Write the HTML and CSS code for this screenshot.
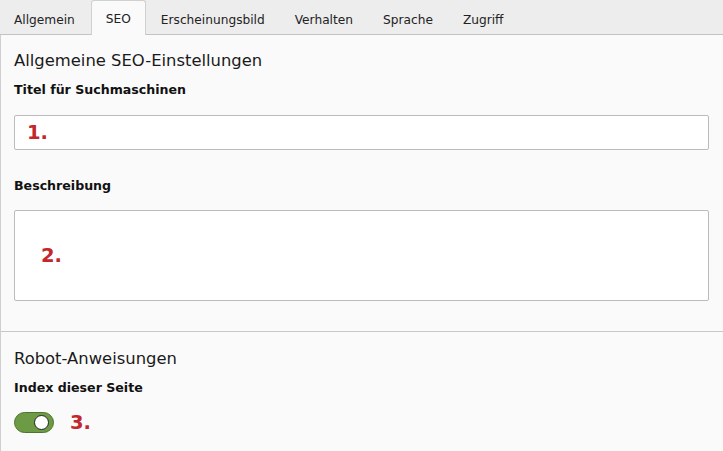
FILE: index.html
```html
<!DOCTYPE html>
<html lang="de">
<head>
<meta charset="utf-8">
<title>SEO</title>
<link rel="stylesheet" href="styles.css">
</head>
<body>
<div class="page">
  <ul class="tabs">
    <li class="tab">Allgemein</li>
    <li class="tab active">SEO</li>
    <li class="tab">Erscheinungsbild</li>
    <li class="tab">Verhalten</li>
    <li class="tab">Sprache</li>
    <li class="tab">Zugriff</li>
  </ul>
  <div class="panel">
    <section class="group group-general">
      <h2 class="group-title">Allgemeine SEO-Einstellungen</h2>
      <div class="field">
        <label class="label">Titel für Suchmaschinen</label>
        <div class="input"><span class="mark">1.</span></div>
      </div>
      <div class="field">
        <label class="label">Beschreibung</label>
        <div class="textarea"><span class="mark">2.</span></div>
      </div>
    </section>
    <section class="group group-robots">
      <h2 class="group-title">Robot-Anweisungen</h2>
      <div class="field">
        <label class="label">Index dieser Seite</label>
        <div class="toggle-row">
          <span class="toggle"><span class="knob"></span></span>
          <span class="mark">3.</span>
        </div>
      </div>
    </section>
  </div>
</div>
</body>
</html>
```

FILE: styles.css
```css
* { box-sizing: border-box; }
html, body { margin: 0; padding: 0; }
body {
  width: 723px;
  height: 451px;
  overflow: hidden;
  font-family: "DejaVu Sans", Verdana, sans-serif;
  color: #111;
  background: #fafafa;
}
.page { display: flex; flex-direction: column; height: 100%; }
.tabs {
  list-style: none;
  margin: 0;
  padding: 0 0 0 0;
  display: flex;
  align-items: flex-end;
  height: 35px;
  background: #ededed;
  border-bottom: 1px solid #c3c3c3;
}
.tab {
  font-size: 12.2px;
  padding: 0 14px;
  height: 34px;
  line-height: 36px;
  color: #222;
  border: 1px solid transparent;
  border-bottom: none;
  margin-bottom: -1px;
}
.tab:first-child { padding: 0 15px 0 13px; }
.tab.active {
  background: #fafafa;
  border-color: #d0d0d0;
  border-radius: 3px 3px 0 0;
  height: 35px;
  line-height: 37px;
  padding: 0 14px;
}
.panel {
  flex: 1;
  background: #fafafa;
  border-left: 1px solid #cfcfcf;
}
.group { padding: 0 14px 0 13px; }
.group-general { padding-top: 16px; padding-bottom: 30px; }
.group-robots {
  border-top: 1px solid #c8c8c8;
  padding-top: 17px;
}
.group-title {
  margin: 0;
  font-size: 16.4px;
  font-weight: normal;
  line-height: 20px;
  color: #1a1a1a;
}
.field { margin-top: 11px; }
.field + .field { margin-top: 28px; }
.label {
  display: block;
  font-size: 12.6px;
  font-weight: bold;
  line-height: 16px;
  color: #111;
}
.input, .textarea {
  margin-top: 17px;
  width: 695px;
  background: #fff;
  border: 1px solid #bbb;
  border-radius: 2px;
  display: flex;
  align-items: center;
}
.input { height: 35px; padding-left: 12px; }
.textarea { height: 91px; padding-left: 26px; margin-top: 16px; }
.mark {
  color: #c1272d;
  font-family: "DejaVu Sans", sans-serif;
  font-weight: bold;
  font-size: 19.5px;
  line-height: 1;
}
.toggle-row {
  margin-top: 16px;
  display: flex;
  align-items: center;
  gap: 16px;
}
.toggle {
  width: 40px;
  height: 21px;
  border-radius: 11px;
  background: #6d9a45;
  border: 1px solid #4d7530;
  display: flex;
  align-items: center;
  justify-content: flex-end;
  padding-right: 4px;
}
.knob {
  width: 15px;
  height: 15px;
  border-radius: 50%;
  background: #fff;
  border: 1.5px solid #222;
}
```
